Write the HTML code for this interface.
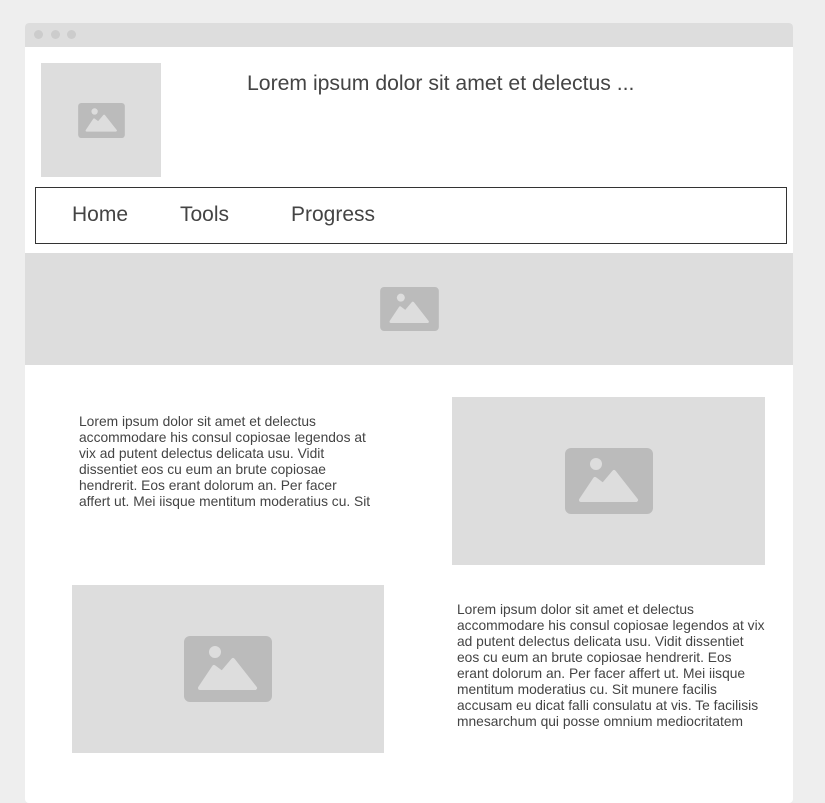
<!DOCTYPE html>
<html><head><style>
*{margin:0;padding:0;box-sizing:border-box}
body{width:825px;height:794px;background:#eee;font-family:"Liberation Sans",sans-serif;position:relative;overflow:hidden;color:#444}
.win{position:absolute;left:25px;top:23px;width:768px;height:780px;background:#fff;border-radius:4px;overflow:hidden}
.bar{height:24px;background:#ddd}
.dot{position:absolute;top:7px;width:9px;height:9px;border-radius:50%;background:#ccc}
.ph{position:absolute;background:#ddd;display:flex;align-items:center;justify-content:center}
.t{position:absolute;font-size:13.8px;line-height:16px;color:#444;white-space:nowrap}
.nav{position:absolute;left:35px;top:187px;width:752px;height:57px;border:1px solid #333}
.nav span{position:absolute;top:15px;font-size:21px;color:#444}
</style></head><body>
<div class="win"><div class="bar"></div>
<div class="dot" style="left:9px"></div><div class="dot" style="left:26px"></div><div class="dot" style="left:42px"></div></div>
<svg width="0" height="0" style="position:absolute"><defs><symbol id="ic" viewBox="0 0 88 66"><rect width="88" height="66" rx="6" fill="#bbb"/><circle cx="31" cy="16" r="6" fill="#ddd"/><path d="M16 52 L30 31 L38 37 L49 24 L71 52 Z" fill="#ddd" stroke="#ddd" stroke-width="4" stroke-linejoin="round"/></symbol></defs></svg>
<div class="ph" style="left:41px;top:63px;width:120px;height:114px"><svg width="47" height="35"><use href="#ic"/></svg></div>
<div style="position:absolute;left:247px;top:72px;font-size:21.2px;color:#444">Lorem ipsum dolor sit amet et delectus ...</div>
<div class="nav"><span style="left:36px">Home</span><span style="left:144px">Tools</span><span style="left:255px">Progress</span></div>
<div class="ph" style="left:25px;top:253px;width:768px;height:112px"><svg width="59" height="44"><use href="#ic"/></svg></div>
<div class="t" style="left:79px;top:414px">Lorem ipsum dolor sit amet et delectus<br>accommodare his consul copiosae legendos at<br>vix ad putent delectus delicata usu. Vidit<br>dissentiet eos cu eum an brute copiosae<br>hendrerit. Eos erant dolorum an. Per facer<br>affert ut. Mei iisque mentitum moderatius cu. Sit</div>
<div class="ph" style="left:452px;top:397px;width:313px;height:168px"><svg width="88" height="66"><use href="#ic"/></svg></div>
<div class="ph" style="left:72px;top:585px;width:312px;height:168px"><svg width="88" height="66"><use href="#ic"/></svg></div>
<div class="t" style="left:457px;top:602px">Lorem ipsum dolor sit amet et delectus<br>accommodare his consul copiosae legendos at vix<br>ad putent delectus delicata usu. Vidit dissentiet<br>eos cu eum an brute copiosae hendrerit. Eos<br>erant dolorum an. Per facer affert ut. Mei iisque<br>mentitum moderatius cu. Sit munere facilis<br>accusam eu dicat falli consulatu at vis. Te facilisis<br>mnesarchum qui posse omnium mediocritatem</div>
</body></html>
